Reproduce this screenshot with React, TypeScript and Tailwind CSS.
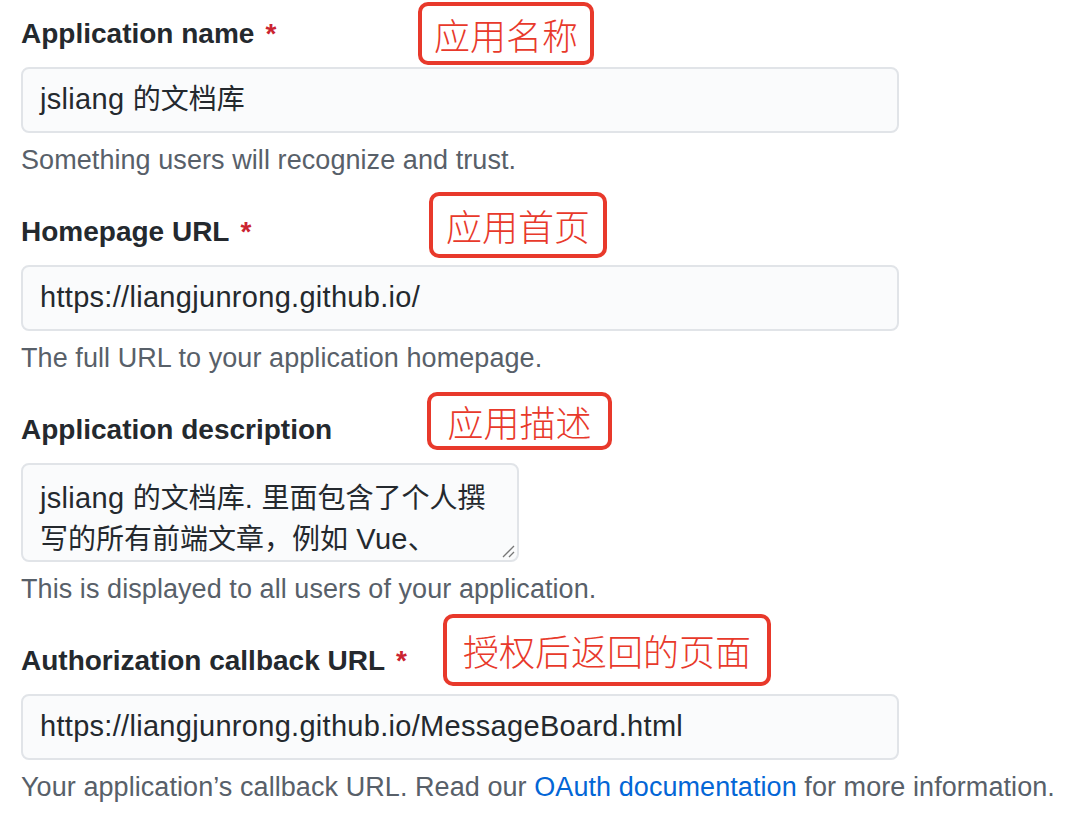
const font = { fontFamily: '"Liberation Sans", "Noto Sans CJK SC", sans-serif' };

type FieldProps = {
  label: string;
  required?: boolean;
  children: React.ReactNode;
  help: React.ReactNode;
};

function Field({ label, required, children, help }: FieldProps) {
  return (
    <div className="flex flex-col">
      <div className="mb-[13px] text-[28px] font-bold leading-[40px] text-[#24292e] whitespace-nowrap">
        {label}
        {required && <span className="ml-[11px] text-[#cb2431]">*</span>}
      </div>
      {children}
      <p className="mt-[9px] text-[27px] leading-[36px] tracking-[0.07px] text-[#586069] whitespace-nowrap">{help}</p>
    </div>
  );
}

function Cjk({ children }: { children: React.ReactNode }) {
  return <span className="text-[28px] tracking-normal">{children}</span>;
}

function TextInput({ children }: { children: React.ReactNode }) {
  return (
    <div className="flex h-[66px] w-[878px] items-center rounded-[8px] border-2 border-[#e1e4e8] bg-[#fafbfc] px-[17px] text-[29px] tracking-[0.3px] text-[#24292e]">
      <span className="whitespace-pre">{children}</span>
    </div>
  );
}

function Note({ text, className }: { text: string; className: string }) {
  return (
    <div
      className={`absolute flex items-center justify-center rounded-[10px] border-[4px] border-[#e8392b] bg-white text-[36px] font-light leading-none text-[#e8392b] ${className}`}
      style={{ fontFamily: '"Noto Sans CJK SC", sans-serif' }}
    >
      {text}
    </div>
  );
}

export default function App() {
  return (
    <div className="relative flex min-h-[816px] w-[1076px] flex-col gap-[34px] bg-white pl-[21px] pt-[14px]" style={font}>
      <Field label="Application name" required help="Something users will recognize and trust.">
        <TextInput>
          jsliang <Cjk>的文档库</Cjk>
        </TextInput>
      </Field>

      <Field label="Homepage URL" required help="The full URL to your application homepage.">
        <TextInput>https://liangjunrong.github.io/</TextInput>
      </Field>

      <Field label="Application description" help="This is displayed to all users of your application.">
        <div className="relative flex h-[99px] w-[498px] flex-col overflow-hidden rounded-[8px] border-2 border-[#e1e4e8] bg-[#fafbfc] px-[17px] pt-[13px] text-[29px] leading-[41px] tracking-[0.3px] text-[#24292e]">
          <div className="whitespace-pre">
            jsliang <Cjk>的文档库</Cjk>. <Cjk>里面包含了个人撰</Cjk>
          </div>
          <div className="whitespace-pre">
            <Cjk>写的所有前端文章，例如</Cjk> Vue<Cjk>、</Cjk>
          </div>
          <svg className="absolute bottom-[2px] right-[2px]" width="14" height="14" viewBox="0 0 14 14">
            <path d="M13 2 L2 13 M13 8 L8 13" stroke="#777" strokeWidth="1.3" fill="none" />
          </svg>
        </div>
      </Field>

      <Field
        label="Authorization callback URL"
        required
        help={
          <>
            Your application’s callback URL. Read our{" "}
            <a className="text-[#0366d6]">OAuth documentation</a> for more information.
          </>
        }
      >
        <TextInput>https://liangjunrong.github.io/MessageBoard.html</TextInput>
      </Field>

      <Note text="应用名称" className="left-[418px] top-[2px] h-[63px] w-[176px]" />
      <Note text="应用首页" className="left-[429px] top-[192px] h-[66px] w-[178px]" />
      <Note text="应用描述" className="left-[427px] top-[392px] h-[58px] w-[185px]" />
      <Note text="授权后返回的页面" className="left-[443px] top-[614px] h-[72px] w-[328px]" />
    </div>
  );
}
